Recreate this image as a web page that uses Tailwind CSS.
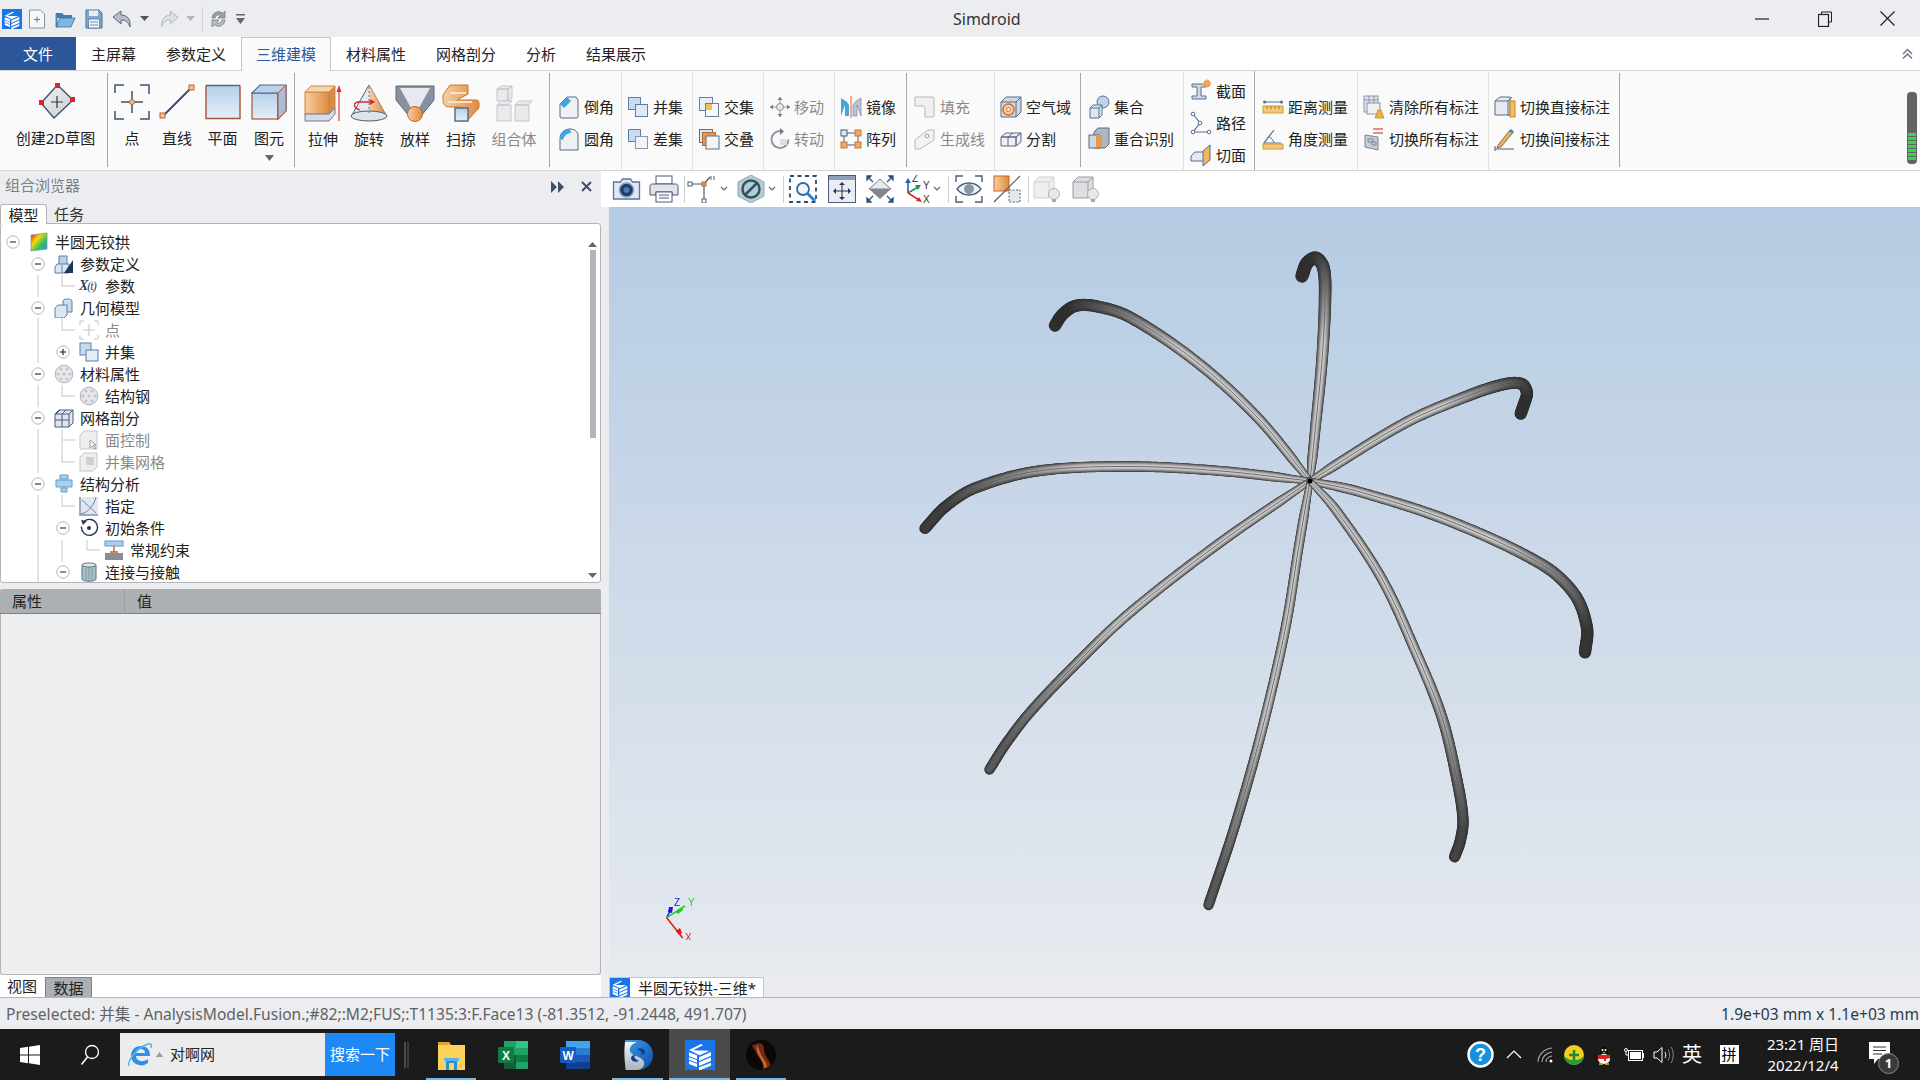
<!DOCTYPE html>
<html lang="en">
<head>
<title>Simdroid</title>
<meta charset="UTF-8">
<script src="https://cdn.jsdelivr.net/npm/@tailwindcss/browser@4"></script>
</head>
<body class="w-[1920px] h-[1080px] overflow-hidden bg-[#ecedf0] text-[15px] leading-none text-[#222] font-['Noto_Sans','Noto_Sans_CJK_SC',sans-serif]">
<svg class="absolute w-0 h-0">
  <defs>
    <linearGradient id="gBlue" x1="0" y1="0" x2="0" y2="1"><stop offset="0" stop-color="#b7d0ea"/><stop offset="1" stop-color="#e4eef8"/></linearGradient>
    <linearGradient id="gGrey" x1="0" y1="0" x2="1" y2="1"><stop offset="0" stop-color="#f2f3f6"/><stop offset="1" stop-color="#c9ccd4"/></linearGradient>
    <linearGradient id="gOrange" x1="0" y1="0" x2="1" y2="0"><stop offset="0" stop-color="#f7cfa2"/><stop offset="1" stop-color="#e08a3e"/></linearGradient>
    <linearGradient id="gRainbow" x1="0" y1="0" x2="1" y2="1"><stop offset="0" stop-color="#e8141c"/><stop offset=".35" stop-color="#f5d80e"/><stop offset=".65" stop-color="#2fc35a"/><stop offset="1" stop-color="#2a8fe8"/></linearGradient>
    <linearGradient id="gSwirl" x1="0" y1="0" x2="1" y2="1"><stop offset="0" stop-color="#3aa0e8"/><stop offset="1" stop-color="#0f4aa8"/></linearGradient>
    <linearGradient id="gSilver" x1="0" y1="0" x2="0" y2="1"><stop offset="0" stop-color="#f4f6f8"/><stop offset="1" stop-color="#aab2bc"/></linearGradient>
    <symbol id="minus" viewBox="0 0 14 14"><circle cx="7" cy="7" r="6.2" fill="#fff" stroke="#b4b4b4"/><path d="M4 7h6" stroke="#666" stroke-width="1.6"/></symbol>
    <symbol id="plus" viewBox="0 0 14 14"><circle cx="7" cy="7" r="6.2" fill="#fff" stroke="#b4b4b4"/><path d="M4 7h6M7 4v6" stroke="#555" stroke-width="1.6"/></symbol>
    <symbol id="chev" viewBox="0 0 8 6"><path d="M1 1l3 3 3-3" fill="none" stroke="#666" stroke-width="1.2"/></symbol>
    <symbol id="ball" viewBox="0 0 20 20"><circle cx="10" cy="10" r="8.8" fill="#e6e7ea" stroke="#aeb1b8"/><g fill="#c3c6cc"><circle cx="7" cy="5" r="1.6"/><circle cx="13" cy="5" r="1.6"/><circle cx="4" cy="10" r="1.6"/><circle cx="10" cy="10" r="1.6"/><circle cx="16" cy="10" r="1.6"/><circle cx="7" cy="15" r="1.6"/><circle cx="13" cy="15" r="1.6"/></g></symbol>
    <symbol id="logo" viewBox="0 0 90 90"><rect width="90" height="90" fill="#1a75e8"/><g fill="#fff"><path d="M12 30 48 12l6 4-30 15 50 1-30 14z"/><path d="M12 37l24 9v36L12 72z"/><path d="M42 52l36-16v11L42 63z"/><path d="M42 67l36-15v11L42 78z"/><path d="M42 82l36-14v9L46 90h-4z" opacity=".95"/></g><path d="M12 50l24 9M12 61l24 9" stroke="#1a75e8" stroke-width="3"/></symbol>
  </defs>
</svg>

<!-- title bar -->
<div class="flex items-center h-[37px] bg-[#ecedf0]">
  <div class="flex items-center w-[953px] pl-[2px]">
    <svg class="w-[20px] h-[20px]"><use href="#logo"/></svg>
    <svg class="ml-[6px] w-[18px] h-[20px]" viewBox="0 0 18 20"><path d="M1.500 1h11l4 4v14h-15z" fill="#f6f7f9" stroke="#8a93a3"/><path d="M6 10.500h6M9 7.500v6" stroke="#6f7787"/></svg>
    <svg class="ml-[9px] w-[21px] h-[18px]" viewBox="0 0 21 18"><path d="M1 3h6l2 2h8v3H1z" fill="#3f7fb5"/><path d="M1 17V4h1v13zM1 17l4-9h15l-4 9z" fill="#7fb6e0" stroke="#3c6f9c" stroke-width=".8"/></svg>
    <svg class="ml-[9px] w-[18px] h-[20px]" viewBox="0 0 18 20"><path d="M1 1h13l3 3v15H1z" fill="#7fa8d0" stroke="#4d7098"/><rect x="4" y="1.500" width="9" height="5.500" fill="#e6eef6"/><rect x="3.500" y="10" width="11" height="9" fill="#eef2f7" stroke="#4d7098" stroke-width=".7"/><path d="M5 13h8M5 16h8" stroke="#7f93a8"/></svg>
    <svg class="ml-[9px] w-[20px] h-[18px]" viewBox="0 0 20 18"><path d="M1 7l8-6v4c6 0 10 4 9 12-2-5-4-7-9-7v4z" fill="#b8bfcb" stroke="#5d6675"/></svg>
    <svg class="ml-[8px] w-[9px] h-[5px]" viewBox="0 0 9 5"><path d="M0 0h9L4.500 5z" fill="#555"/></svg>
    <svg class="ml-[11px] w-[19px] h-[18px]" viewBox="0 0 20 18"><path d="M19 7l-8-6v4C5 5 1 9 2 17c2-5 4-7 9-7v4z" fill="#dcdfe5" stroke="#b0b5bf"/></svg>
    <svg class="ml-[7px] w-[9px] h-[5px]" viewBox="0 0 9 5"><path d="M0 0h9L4.500 5z" fill="#b5b5b5"/></svg>
    <div class="ml-[7px] w-px h-[24px] bg-[#cfd0d4]"></div>
    <svg class="ml-[7px] w-[17px] h-[20px]" viewBox="0 0 17 20"><path d="M2 9a6.500 6.500 0 0 1 11-4.500L15 2v7H8l2.500-2.500A3.500 3.500 0 0 0 5 9z" fill="#9ca2ac" stroke="#6e747e" stroke-width=".7"/><path d="M15 11a6.500 6.500 0 0 1-11 4.500L2 18v-7h7l-2.500 2.500A3.500 3.500 0 0 0 12 11z" fill="#b8bcc4" stroke="#6e747e" stroke-width=".7"/></svg>
    <svg class="ml-[9px] w-[9px] h-[10px]" viewBox="0 0 9 10"><path d="M0 0h9v1.500H0zM0 4h9L4.500 10z" fill="#666"/></svg>
  </div>
  <span class="text-[16px] text-[#333]">Simdroid</span>
  <div class="ml-auto flex mr-[1px]">
    <div class="w-[63px] h-[37px] flex items-center justify-center"><svg class="w-[14px] h-[14px]" viewBox="0 0 14 14"><path d="M0 7h14" stroke="#222" stroke-width="1.2"/></svg></div>
    <div class="w-[63px] h-[37px] flex items-center justify-center"><svg class="w-[14px] h-[16px]" viewBox="0 0 14 16"><path d="M3.500 3V1h10v10h-3" fill="none" stroke="#222"/><rect x=".5" y="3.500" width="10" height="12" fill="none" stroke="#222" stroke-width="1.200"/></svg></div>
    <div class="w-[63px] h-[37px] flex items-center justify-center"><svg class="w-[15px] h-[15px]" viewBox="0 0 15 15"><path d="M.5.500l14 14M14.500.500l-14 14" stroke="#222" stroke-width="1.200"/></svg></div>
  </div>
</div>

<!-- ribbon tabs -->
<div class="flex items-stretch h-[33px] bg-white relative z-10">
  <div class="w-[76px] pt-[1px] bg-[#2b579a] text-white flex items-center justify-center">文件</div>
  <div class="px-[15px] pt-[1px] flex items-center">主屏幕</div>
  <div class="px-[15px] pt-[1px] flex items-center">参数定义</div>
  <div class="px-[14px] flex items-center h-[34px] text-[#2b579a] bg-[#fafafa] border border-b-0 border-[#c4c6ca]">三维建模</div>
  <div class="px-[15px] pt-[1px] flex items-center">材料属性</div>
  <div class="px-[15px] pt-[1px] flex items-center">网格剖分</div>
  <div class="px-[15px] pt-[1px] flex items-center">分析</div>
  <div class="px-[15px] pt-[1px] flex items-center">结果展示</div>
  <div class="ml-auto mr-[6px] flex items-center"><svg class="w-[13px] h-[12px]" viewBox="0 0 13 12"><path d="M2 6l4.500-4.500L11 6M2 10.500l4.500-4.500 4.500 4.500" fill="none" stroke="#6d7788" stroke-width="1.500"/></svg></div>
</div>

<!-- ribbon -->
<div class="flex h-[101px] bg-[#fafafa] border-y border-[#d3d3d3]">
  <!-- sketch -->
  <div class="w-[107px] pl-[4px] flex flex-col items-center pt-[12px]">
    <svg class="ml-[2px] w-[36px] h-[38px]" viewBox="0 0 36 38"><path d="M18.500 2 34 17 15 35 2 20z" fill="url(#gGrey)" stroke="#3e5470" stroke-width="1.400"/><path d="M18 13v12M12 19h12" stroke="#333" stroke-width="1.200"/><g fill="#d8242a"><rect x="16" y="0" width="5" height="5"/><rect x="0" y="17" width="5" height="5"/><rect x="31" y="14" width="5" height="5"/></g></svg>
    <span class="mt-[10px] whitespace-nowrap">创建2D草图</span>
  </div>
  <div class="w-px h-[94px] mt-[2px] bg-[#a8a8a8]"></div>

  <!-- primitives -->
  <div class="w-[186px] pl-[1px] flex">
    <div class="w-[46px] flex flex-col items-center pt-[13px]">
      <svg class="w-[36px] h-[36px]" viewBox="0 0 36 36"><path d="M1 9V1h9M26 1h9v9M35 27v8h-9M10 35H1v-8" fill="none" stroke="#3e5470" stroke-width="1.500"/><path d="M18 7v22M7 18h22" stroke="#3e5470" stroke-width="1.500"/><circle cx="18" cy="18" r="2.500" fill="#f1c38e" stroke="#c8612a"/></svg>
      <span class="mt-[11px]">点</span>
    </div>
    <div class="w-[44px] flex flex-col items-center pt-[13px]">
      <svg class="w-[36px] h-[36px]" viewBox="0 0 36 36"><path d="M4 32 32 4" stroke="#2f4a6b" stroke-width="1.800"/><rect x="1" y="29" width="5" height="5" fill="#f1c38e" stroke="#c8612a"/><rect x="30" y="1" width="5" height="5" fill="#f1c38e" stroke="#c8612a"/></svg>
      <span class="mt-[11px]">直线</span>
    </div>
    <div class="w-[47px] flex flex-col items-center pt-[13px]">
      <svg class="w-[36px] h-[36px]" viewBox="0 0 36 36"><rect x="1" y="1.500" width="34" height="33" fill="url(#gBlue)"/><path d="M1 1.500h34" stroke="#4b678c" stroke-width="1.400"/><path d="M1 1.500v33h34v-33" fill="none" stroke="#a4553a" stroke-width="1.400"/></svg>
      <span class="mt-[11px]">平面</span>
    </div>
    <div class="w-[46px] flex flex-col items-center pt-[13px]">
      <svg class="w-[36px] h-[36px]" viewBox="0 0 36 36"><rect x="1" y="9" width="26" height="26" fill="url(#gBlue)" stroke="#a4553a" stroke-width="1.200"/><path d="M1 9l8-8h26v26l-8 8V9z" fill="#bcd0e6" stroke="#4b678c" stroke-width="1.200"/><path d="M27 9l8-8" stroke="#4b678c"/><path d="M27 9v26l8-8V1z" fill="#a9bed6" stroke="#a4553a"/></svg>
      <span class="mt-[11px]">图元</span>
      <svg class="mt-[9px] w-[9px] h-[6px]" viewBox="0 0 9 6"><path d="M0 0h9L4.500 6z" fill="#666"/></svg>
    </div>
    <div class="flex-1"></div>
  </div>
  <div class="w-px h-[94px] mt-[2px] bg-[#a8a8a8]"></div>

  <!-- solids -->
  <div class="w-[254px] flex pl-[5px]">
    <div class="w-[46px] flex flex-col items-center pt-[13px]">
      <svg class="w-[38px] h-[38px]" viewBox="0 0 38 38"><rect x="1" y="8" width="24" height="22" fill="url(#gOrange)" stroke="#c98645"/><path d="M1 8l6-6h24l-6 6z" fill="#f5d5b0" stroke="#c98645"/><path d="M25 8l6-6v22l-6 6z" fill="#d98b46" stroke="#c98645"/><path d="M1 30h24l6-6v6l-6 7H1z" fill="#d7dbe3" stroke="#6f7c90"/><path d="M35 37V5" stroke="#e64a4a" stroke-width="1.300"/><path d="M32.500 8 35 1l2.500 7z" fill="#e03030"/></svg>
      <span class="mt-[10px]">拉伸</span>
    </div>
    <div class="w-[46px] flex flex-col items-center pt-[13px]">
      <svg class="w-[38px] h-[38px]" viewBox="0 0 38 38"><path d="M19 1 2 31h34z" fill="#e6e9ef" stroke="#4b5d75"/><path d="M19 1v30h17z" fill="url(#gOrange)"/><ellipse cx="19" cy="32" rx="18" ry="5" fill="#dfe3ea" stroke="#4b5d75"/><path d="M19 3v28" stroke="#5f7a9c" stroke-dasharray="2 2"/><path d="M24 18H8c-5 1-5 6 2 8" fill="none" stroke="#d92a2a" stroke-width="1.300"/><path d="M25 18l-5-3v6z" fill="#d92a2a"/></svg>
      <span class="mt-[10px]">旋转</span>
    </div>
    <div class="w-[46px] flex flex-col items-center pt-[13px]">
      <svg class="w-[40px] h-[38px]" viewBox="0 0 40 38"><path d="M1 2h38v14L26 32H14L1 16z" fill="#8791a1" stroke="#5e6a7c"/><path d="M5 4h30L24 24h-8z" fill="#e7e9ee"/><circle cx="20" cy="30" r="7.500" fill="url(#gOrange)" stroke="#b96a2c"/></svg>
      <span class="mt-[10px]">放样</span>
    </div>
    <div class="w-[46px] flex flex-col items-center pt-[13px]">
      <svg class="w-[38px] h-[38px]" viewBox="0 0 38 38"><path d="M8 1h18v9l-11 6h19c3 0 3 2 3 4v4l-12 13H19V23H8c-5 0-7-3-7-6v-6z" fill="url(#gOrange)" stroke="#c47a3c"/><path d="M8 9h16M6 18h24" stroke="#fbe5cc" stroke-width="2"/><rect x="13" y="24" width="13" height="13" fill="url(#gBlue)" stroke="#4b5d75" stroke-width="1.300"/></svg>
      <span class="mt-[10px]">扫掠</span>
    </div>
    <div class="w-[60px] flex flex-col items-center pt-[13px] text-[#8a8a8a]">
      <svg class="w-[38px] h-[38px]" viewBox="0 0 38 38"><g fill="#e9eaec" stroke="#c4c6ca"><path d="M2 5l4-3h11l-4 3zM2 5h11v12H2zM13 5l4-3v12l-4 3z"/><path d="M2 21l4-4h11l-4 4zM2 21h14v16H2z"/><path d="M20 21l4-4h13l-4 4zM20 21h14v16H20z"/></g></svg>
      <span class="mt-[10px]">组合体</span>
    </div>
  </div>
  <div class="w-px h-[94px] mt-[2px] bg-[#a8a8a8]"></div>

  <!-- blends -->
  <div class="w-[72px] pl-[8px] pt-[20px] border-r border-[#e2e2e2]">
    <div class="flex items-center h-[32px]"><svg class="w-[22px] h-[24px] mr-[4px]" viewBox="0 0 22 24"><path d="M2 9 9 2h9l2 3v17l-1 1H3l-1-1z" fill="#eef0f4" stroke="#5a6a80"/><path d="M2 9 9 2l4 4-7 7z" fill="#3ba7e0"/></svg>倒角</div>
    <div class="flex items-center h-[32px]"><svg class="w-[22px] h-[24px] mr-[4px]" viewBox="0 0 22 24"><path d="M2 12C2 5 7 2 12 2c5 0 8 3 8 6v15H2z" fill="#eef0f4" stroke="#5a6a80"/><path d="M2 12C2 5 7 2 12 2l1 4c-4 0-7 3-8 7z" fill="#3ba7e0"/></svg>圆角</div>
  </div>
  <!-- booleans -->
  <div class="w-[71px] pl-[5px] pt-[20px] border-r border-[#e2e2e2]">
    <div class="flex items-center h-[32px]"><svg class="w-[22px] h-[22px] mr-[4px]" viewBox="0 0 22 22"><rect x="1.500" y="1.500" width="12" height="12" fill="#c7dcf0" stroke="#5a7fa8"/><rect x="8.500" y="8.500" width="12" height="12" fill="#dfe9f4" stroke="#5a7fa8"/></svg>并集</div>
    <div class="flex items-center h-[32px]"><svg class="w-[22px] h-[22px] mr-[4px]" viewBox="0 0 22 22"><path d="M1.500 1.500h12v7h-5v5h-7z" fill="#c7dcf0" stroke="#5a7fa8"/><rect x="8.500" y="8.500" width="12" height="12" fill="#f2f4f7" stroke="#8a97a8"/></svg>差集</div>
  </div>
  <div class="w-[71px] pl-[5px] pt-[20px] border-r border-[#e2e2e2]">
    <div class="flex items-center h-[32px]"><svg class="w-[22px] h-[22px] mr-[4px]" viewBox="0 0 22 22"><rect x="1.500" y="1.500" width="13" height="13" fill="#e6eef6" stroke="#6a8098"/><rect x="7.500" y="7.500" width="13" height="13" fill="#f5f7fa" stroke="#6a8098"/><rect x="8" y="8" width="6" height="6" fill="#f3c04a"/></svg>交集</div>
    <div class="flex items-center h-[32px]"><svg class="w-[22px] h-[22px] mr-[4px]" viewBox="0 0 22 22"><rect x="1.500" y="1.500" width="13" height="13" fill="#dbe6f1" stroke="#5a7088"/><rect x="4.500" y="4.500" width="13" height="13" fill="#e89a4a" stroke="#b46a2a"/><rect x="8" y="8" width="13" height="13" fill="#f2f4f7" stroke="#5a7088"/></svg>交叠</div>
  </div>
  <!-- move -->
  <div class="w-[71px] pl-[5px] pt-[20px] border-r border-[#e2e2e2] text-[#8a8a8a]">
    <div class="flex items-center h-[32px]"><svg class="w-[22px] h-[22px] mr-[3px]" viewBox="0 0 22 22"><path d="M11 1v20M1 11h20" stroke="#8c9098"/><path d="M11 1l-2.500 3h5zM11 21l-2.500-3h5zM1 11l3-2.500v5zM21 11l-3-2.500v5z" fill="#747a84"/><circle cx="11" cy="11" r="3.500" fill="#e8e9ec" stroke="#8c9098"/></svg>移动</div>
    <div class="flex items-center h-[32px]"><svg class="w-[22px] h-[22px] mr-[3px]" viewBox="0 0 22 22"><path d="M11 3a8.500 8.500 0 1 0 8.500 8.500" fill="none" stroke="#8c9098" stroke-width="1.800"/><path d="M11 0v7l4-3.500z" fill="#747a84"/><path d="M11 11h7v6h-7z" fill="#dcdee2"/></svg>转动</div>
  </div>
  <!-- mirror -->
  <div class="w-[71px] pl-[5px] pt-[20px]">
    <div class="flex items-center h-[32px]"><svg class="w-[22px] h-[22px] mr-[4px]" viewBox="0 0 22 22"><path d="M1 20V2l6 4 2 3v11H5V9z" fill="#47a3d9"/><path d="M21 20V2l-6 4-2 3v11h4V9z" fill="#b9c4d2" stroke="#6f7c90" stroke-width=".6"/><path d="M11 0v22" stroke="#e58a5f" stroke-width="1.400"/></svg>镜像</div>
    <div class="flex items-center h-[32px]"><svg class="w-[22px] h-[22px] mr-[4px]" viewBox="0 0 22 22"><path d="M4 5h14M4 17h14M4 5v12M18 5v12" stroke="#4b5d75"/><rect x="1" y="2" width="6" height="6" fill="#dfe7f0" stroke="#4b5d75"/><rect x="15" y="2" width="6" height="6" fill="#f1a866" stroke="#c47a3c"/><rect x="1" y="14" width="6" height="6" fill="#f1a866" stroke="#c47a3c"/><rect x="15" y="14" width="6" height="6" fill="#f1a866" stroke="#c47a3c"/></svg>阵列</div>
  </div>
  <div class="w-px h-[94px] mt-[2px] bg-[#a8a8a8]"></div>
  <!-- fill -->
  <div class="w-[88px] pl-[7px] pt-[20px] border-r border-[#e2e2e2] text-[#8a8a8a]">
    <div class="flex items-center h-[32px]"><svg class="w-[22px] h-[22px] mr-[4px]" viewBox="0 0 22 22"><path d="M1 1h18l1 1v18l-1 1h-8v-9c0-1-1-2-2-2H1z" fill="#f0f0f1" stroke="#b4b6ba"/></svg>填充</div>
    <div class="flex items-center h-[32px]"><svg class="w-[22px] h-[22px] mr-[4px]" viewBox="0 0 22 22"><path d="M1 12 14 2h6v10L6 21H1z" fill="#f2f2f3" stroke="#b4b6ba"/><circle cx="13" cy="8" r="1.800" fill="#fff" stroke="#9a9ca0"/></svg>生成线</div>
  </div>
  <!-- air -->
  <div class="w-[85px] pl-[5px] pt-[20px]">
    <div class="flex items-center h-[32px]"><svg class="w-[22px] h-[22px] mr-[4px]" viewBox="0 0 22 22"><path d="M1 6l5-5h15v15l-5 5H1z" fill="#cfd9e6" stroke="#5a6a80"/><path d="M1 6h15v15M16 6l5-5" fill="none" stroke="#5a6a80"/><circle cx="8.500" cy="13.500" r="5.500" fill="#f6cfa6" stroke="#d06a2a" stroke-width="1.400"/><circle cx="8.500" cy="13.500" r="2" fill="#fff" stroke="#d06a2a"/></svg>空气域</div>
    <div class="flex items-center h-[32px]"><svg class="w-[22px] h-[22px] mr-[4px]" viewBox="0 0 22 22"><path d="M1 9l5-4h15l-5 4zM1 9h15v9H1zM16 9l5-4v9l-5 4z" fill="#eef0f4" stroke="#5a6a80"/><path d="M8 9v9M8 9l5-4" stroke="#5a6a80"/></svg>分割</div>
  </div>
  <div class="w-px h-[94px] mt-[2px] bg-[#a8a8a8]"></div>
  <!-- assembly -->
  <div class="w-[103px] pl-[7px] pt-[20px] border-r border-[#e2e2e2]">
    <div class="flex items-center h-[32px]"><svg class="w-[22px] h-[24px] mr-[4px]" viewBox="0 0 22 24"><circle cx="15" cy="7" r="6" fill="#bcd3ea" stroke="#55708e"/><path d="M2 13l3-3h9v10l-3 3H2z" fill="#dce7f2" stroke="#55708e"/><path d="M2 13h9v10M11 13l3-3" fill="none" stroke="#55708e"/></svg>集合</div>
    <div class="flex items-center h-[32px]"><svg class="w-[22px] h-[24px] mr-[4px]" viewBox="0 0 22 24"><path d="M6 5l4-4h11v16l-4 4H6z" fill="#aeb6c2" stroke="#5a6a80"/><rect x="1" y="8" width="10" height="13" fill="#cfd6df" stroke="#5a6a80"/><rect x="8" y="8" width="6" height="12" fill="#ea9a45"/></svg>重合识别</div>
  </div>
  <!-- section -->
  <div class="w-[71px] pl-[6px] pt-[4px] border-r border-[#a8a8a8]">
    <div class="flex items-center h-[32px]"><svg class="w-[22px] h-[24px] mr-[4px]" viewBox="0 0 22 24"><path d="M2 5h14v3h-5v9h5v3H2v-3h5V8H2z" fill="#cfd9e6" stroke="#55708e"/><circle cx="17" cy="4.500" r="3.500" fill="#f3953b"/><path d="M17 0v9M12.500 4.500h9" stroke="#f3b47a"/></svg>截面</div>
    <div class="flex items-center h-[32px]"><svg class="w-[22px] h-[24px] mr-[4px]" viewBox="0 0 22 24"><path d="M3 3l7 9-7 9h16" fill="none" stroke="#55708e" stroke-width="1.200"/><g fill="#fff" stroke="#55708e"><circle cx="3" cy="3" r="1.800"/><circle cx="10" cy="12" r="1.800"/><circle cx="3" cy="21" r="1.800"/><circle cx="19" cy="21" r="1.800"/></g></svg>路径</div>
    <div class="flex items-center h-[32px]"><svg class="w-[22px] h-[24px] mr-[4px]" viewBox="0 0 22 24"><path d="M1 13l4-4h9v9H1z" fill="#e6eaf0" stroke="#55708e"/><path d="M13 8l7-6v15l-7 6z" fill="#f5b45c" stroke="#55708e"/></svg>切面</div>
  </div>
  <!-- measure -->
  <div class="w-[103px] pl-[7px] pt-[20px] border-r border-[#e2e2e2]">
    <div class="flex items-center h-[32px]"><svg class="w-[22px] h-[22px] mr-[4px]" viewBox="0 0 22 22"><path d="M2 6h18" stroke="#55708e"/><circle cx="2.500" cy="6" r="1.500" fill="#55708e"/><circle cx="19.500" cy="6" r="1.500" fill="#55708e"/><rect x="1" y="10" width="20" height="7" fill="#f3c678" stroke="#d69a3c"/><path d="M5 10v3M9 10v3M13 10v3M17 10v3" stroke="#a8742a"/></svg>距离测量</div>
    <div class="flex items-center h-[32px]"><svg class="w-[22px] h-[22px] mr-[4px]" viewBox="0 0 22 22"><path d="M12 2 2 15h17" fill="none" stroke="#55708e" stroke-width="1.200"/><path d="M7 9c3 1 4 3 5 6" fill="none" stroke="#55708e"/><rect x="1" y="16" width="20" height="5" fill="#f3c678" stroke="#d69a3c"/></svg>角度测量</div>
  </div>
  <!-- annotate -->
  <div class="w-[131px] pl-[5px] pt-[20px] border-r border-[#e2e2e2]">
    <div class="flex items-center h-[32px]"><svg class="w-[22px] h-[24px] mr-[4px]" viewBox="0 0 22 24"><rect x="1" y="1" width="14" height="16" fill="#dfe4ec" stroke="#8a95a5"/><path d="M1 5h14M6 1v16M11 1v16" stroke="#8a95a5"/><rect x="4" y="8" width="13" height="11" fill="#eef0f4" stroke="#8a95a5"/><path d="M15 15h3l3 8h-9z" fill="#efb43f" stroke="#b47e1c" stroke-width=".7"/></svg>清除所有标注</div>
    <div class="flex items-center h-[32px]"><svg class="w-[22px] h-[24px] mr-[4px]" viewBox="0 0 22 24"><path d="M2 8l13 2v13L2 20z" fill="#c5ccd6" stroke="#7b8797"/><path d="M5 12h5v3H5zM9 15h4v3H9z" fill="none" stroke="#7b8797"/><path d="M10 2h10M10 6h10" stroke="#e6695a" stroke-width="1.300"/></svg>切换所有标注</div>
  </div>
  <div class="w-[130px] pl-[5px] pt-[20px]">
    <div class="flex items-center h-[32px]"><svg class="w-[22px] h-[24px] mr-[4px]" viewBox="0 0 22 24"><path d="M1 6l5-4h10v18H1z" fill="#e6eaf0" stroke="#5a6a80"/><path d="M1 6h13v15M14 6l4-4" fill="none" stroke="#5a6a80"/><rect x="16" y="6" width="5" height="16" fill="#f2bd60" stroke="#c8862a"/></svg>切换直接标注</div>
    <div class="flex items-center h-[32px]"><svg class="w-[22px] h-[24px] mr-[4px]" viewBox="0 0 22 24"><path d="M1 22h19M1 19v6" stroke="#4b5d75"/><path d="M4 18 16 3l3 2.500L7 20l-4 1z" fill="#efb43f" stroke="#4b5d75" stroke-width=".8"/><path d="M15 4l2-2 3 2.500-2 2z" fill="#4f82c0"/></svg>切换间接标注</div>
  </div>
  <div class="w-px h-[94px] mt-[2px] bg-[#a8a8a8]"></div>
  <div class="ml-auto mr-[3px] mt-[21px] w-[10px] h-[72px] rounded-[4px] bg-[#636363] flex flex-col justify-end gap-[1px] px-[1px] pb-[4px]">
    <div class="h-[3px] bg-[#39d353]"></div><div class="h-[3px] bg-[#39d353]"></div><div class="h-[3px] bg-[#39d353]"></div><div class="h-[3px] bg-[#39d353]"></div><div class="h-[3px] bg-[#39d353]"></div><div class="h-[3px] bg-[#39d353]"></div><div class="h-[3px] bg-[#39d353]"></div>
  </div>
</div>

<!-- main area -->
<div class="flex h-[826px]">
  <!-- left dock -->
  <div class="w-[601px] flex flex-col">
    <div class="h-[33px] flex items-center pl-[5px] text-[#7b7f85]">
      <span class="-mt-[4px]">组合浏览器</span>
      <svg class="ml-auto -mt-[2px] w-[13px] h-[12px]" viewBox="0 0 13 12"><path d="M0 0l6 6-6 6zM7 0l6 6-6 6z" fill="#3f5166"/></svg>
      <svg class="ml-[17px] -mt-[2px] mr-[9px] w-[11px] h-[11px]" viewBox="0 0 11 11"><path d="M1 1l9 9M10 1l-9 9" stroke="#3f5166" stroke-width="2"/></svg>
    </div>
    <div class="h-[19px] flex relative z-10">
      <div class="w-[47px] h-[20px] pt-[1px] bg-white border border-b-0 border-[#b5b5b5] rounded-t-[3px] flex items-center justify-center">模型</div>
      <div class="pl-[7px] pt-[1px] flex items-center text-[#333]">任务</div>
    </div>
    <!-- tree -->
    <div class="relative h-[360px] bg-white border border-[#b5b5b5] rounded-[3px] overflow-hidden pt-[7px]">
      <svg class="absolute left-0 top-0 w-[599px] h-[358px]" viewBox="1 224 599 358"><path d="M38 275v22M38 318v45M38 385v22M38 429v44M38 495v88M62 275v11h13M62 318v12h13M62 385v11h13M62 429v33h13M62 440h13M62 495v11h13M62 540v22M87 540v10h13" fill="none" stroke="#d9d9d9" stroke-width="1.400"/></svg>

      <div class="relative flex items-center h-[22px] pl-[5px]"><svg class="w-[14px] h-[14px]"><use href="#minus"/></svg><svg class="ml-[9px] w-[20px] h-[20px]" viewBox="0 0 20 20"><path d="M2 3 18 1v16L2 19z" fill="url(#gRainbow)" stroke="#7d94aa" stroke-width=".8"/></svg><span class="ml-[6px]">半圆无铰拱</span></div>
      <div class="relative flex items-center h-[22px] pl-[30px]"><svg class="w-[14px] h-[14px]"><use href="#minus"/></svg><svg class="ml-[9px] w-[20px] h-[20px]" viewBox="0 0 20 20"><path d="M5 2h8v9H5z" fill="#b9d2ea" stroke="#5d7fa3"/><path d="M1 13l2-3h12v9H1z" fill="#dbe7f3" stroke="#5d7fa3"/><path d="M8 11v8" stroke="#5d7fa3"/><path d="M19 6v13h-9z" fill="#1f3559"/></svg><span class="ml-[6px]">参数定义</span></div>
      <div class="relative flex items-center h-[22px] pl-[55px]"><div class="w-[14px]"></div><span class="ml-[9px] w-[20px] text-[12px] italic font-['Liberation_Serif',serif] text-[#33435c] whitespace-nowrap tracking-[-1px]"><b class="text-[14px]">X</b>(t)</span><span class="ml-[6px]">参数</span></div>
      <div class="relative flex items-center h-[22px] pl-[30px]"><svg class="w-[14px] h-[14px]"><use href="#minus"/></svg><svg class="ml-[9px] w-[20px] h-[20px]" viewBox="0 0 20 20"><ellipse cx="13.500" cy="3" rx="4.500" ry="2" fill="#dbe7f3" stroke="#5d7fa3"/><path d="M9 3v11h9V3" fill="#c7dbee" stroke="#5d7fa3"/><path d="M1 10l3-3h9v10l-3 3H1z" fill="#dbe7f3" stroke="#5d7fa3"/></svg><span class="ml-[6px]">几何模型</span></div>
      <div class="relative flex items-center h-[22px] pl-[55px] text-[#8a8a8a]"><div class="w-[14px]"></div><svg class="ml-[9px] w-[20px] h-[20px]" viewBox="0 0 20 20"><path d="M1 5V1h4M15 1h4v4M19 15v4h-4M5 19H1v-4M10 4v12M4 10h12" fill="none" stroke="#bfc2c7"/></svg><span class="ml-[6px]">点</span></div>
      <div class="relative flex items-center h-[22px] pl-[55px]"><svg class="w-[14px] h-[14px]"><use href="#plus"/></svg><svg class="ml-[9px] w-[20px] h-[20px]" viewBox="0 0 20 20"><rect x="1" y="1" width="11" height="12" fill="#c7dcf0" stroke="#5a7fa8"/><rect x="7" y="8" width="12" height="11" fill="#e4ecf5" stroke="#5a7fa8"/></svg><span class="ml-[6px]">并集</span></div>
      <div class="relative flex items-center h-[22px] pl-[30px]"><svg class="w-[14px] h-[14px]"><use href="#minus"/></svg><svg class="ml-[9px] w-[20px] h-[20px]"><use href="#ball"/></svg><span class="ml-[6px]">材料属性</span></div>
      <div class="relative flex items-center h-[22px] pl-[55px]"><div class="w-[14px]"></div><svg class="ml-[9px] w-[20px] h-[20px]"><use href="#ball"/></svg><span class="ml-[6px]">结构钢</span></div>
      <div class="relative flex items-center h-[22px] pl-[30px]"><svg class="w-[14px] h-[14px]"><use href="#minus"/></svg><svg class="ml-[9px] w-[20px] h-[20px]" viewBox="0 0 20 20"><path d="M1 6l4-4h14v13l-4 4H1z" fill="#dfe6ef" stroke="#4b5d75"/><path d="M1 6h14v13M15 6l4-4M1 12h14M8 6v13M6 2 2 6M12 2 8 6" fill="none" stroke="#4b5d75"/></svg><span class="ml-[6px]">网格剖分</span></div>
      <div class="relative flex items-center h-[22px] pl-[55px] text-[#8a8a8a]"><div class="w-[14px]"></div><svg class="ml-[9px] w-[20px] h-[20px]" viewBox="0 0 20 20"><path d="M1 5l4-4h13v18H1z" fill="#eeeeef" stroke="#c4c6ca"/><path d="M11 10v8l2-2 3 3 1-1-3-3h3z" fill="#fff" stroke="#9a9ca0"/></svg><span class="ml-[6px]">面控制</span></div>
      <div class="relative flex items-center h-[22px] pl-[55px] text-[#8a8a8a]"><div class="w-[14px]"></div><svg class="ml-[9px] w-[20px] h-[20px]" viewBox="0 0 20 20"><path d="M1 5l4-4h13v14l-4 4H1z" fill="#eeeeef" stroke="#c4c6ca"/><rect x="7" y="5" width="8" height="8" fill="#cfd0d3"/></svg><span class="ml-[6px]">并集网格</span></div>
      <div class="relative flex items-center h-[22px] pl-[30px]"><svg class="w-[14px] h-[14px]"><use href="#minus"/></svg><svg class="ml-[9px] w-[20px] h-[20px]" viewBox="0 0 20 20"><path d="M6 1h8v4H6zM2 6h16v7H2zM7 14h6v4H7z" fill="#a8d0ee" stroke="#5c9dcc"/></svg><span class="ml-[6px]">结构分析</span></div>
      <div class="relative flex items-center h-[22px] pl-[55px]"><div class="w-[14px]"></div><svg class="ml-[9px] w-[20px] h-[20px]" viewBox="0 0 20 20"><rect x="1" y="1" width="18" height="18" fill="#e3e6ec"/><path d="M1 1v18h18" fill="none" stroke="#8794a8" stroke-width="1.500"/><path d="M3 4l14 13M2 18C10 16 15 9 17 1" fill="none" stroke="#4d8fc4"/></svg><span class="ml-[6px]">指定</span></div>
      <div class="relative flex items-center h-[22px] pl-[55px]"><svg class="w-[14px] h-[14px]"><use href="#minus"/></svg><svg class="ml-[9px] w-[20px] h-[20px]" viewBox="0 0 20 20"><path d="M5 3.500a8 8 0 1 1-2.500 5" fill="none" stroke="#2a3b52" stroke-width="1.400"/><path d="M2 2l6 1-4 4z" fill="#2a3b52"/><circle cx="10" cy="10" r="2" fill="#1f3559"/></svg><span class="ml-[6px]">初始条件</span></div>
      <div class="relative flex items-center h-[22px] pl-[103px]"><svg class="w-[20px] h-[20px]" viewBox="0 0 20 20"><rect x="1" y="1" width="18" height="5" fill="#a8d0ee" stroke="#5c9dcc"/><path d="M10 6v6M6 12h8" stroke="#c8612a" stroke-width="1.400"/><rect x="1" y="13" width="18" height="7" fill="#8a8d94"/></svg><span class="ml-[6px]">常规约束</span></div>
      <div class="relative flex items-center h-[22px] pl-[55px]"><svg class="w-[14px] h-[14px]"><use href="#minus"/></svg><svg class="ml-[9px] w-[20px] h-[20px]" viewBox="0 0 20 20"><path d="M3 3v14c0 3 14 3 14 0V3" fill="#a9c0c8" stroke="#5a7480"/><ellipse cx="10" cy="3" rx="7" ry="2" fill="#dfe9ee" stroke="#5a7480"/><path d="M7 6v12M10 6v13M13 6v12" stroke="#7d99a5"/></svg><span class="ml-[6px]">连接与接触</span></div>

      <!-- tree scrollbar -->
      <svg class="absolute left-[586px] top-[17px] w-[11px] h-[7px]" viewBox="0 0 11 7"><path d="M5.500 1 10 6H1z" fill="#666"/></svg>
      <div class="absolute left-[589px] top-[26px] w-[6px] h-[188px] bg-[#b4b6b9]"></div>
      <svg class="absolute left-[586px] top-[348px] w-[11px] h-[7px]" viewBox="0 0 11 7"><path d="M5.500 6 10 1H1z" fill="#666"/></svg>
    </div>
    <div class="h-[6px]"></div>
    <!-- properties -->
    <div class="h-[25px] flex items-center bg-[#adb0b3] border-b border-[#7f8285] rounded-t-[2px]">
      <div class="w-[125px] h-full pl-[12px] pt-[1px] flex items-center border-r border-[#9a9da0]">属性</div>
      <div class="pl-[12px] pt-[1px]">值</div>
    </div>
    <div class="h-[361px] bg-[#eceef0] border border-t-0 border-[#b5b5b5] rounded-b-[3px]"></div>
    <div class="h-[22px] flex bg-white">
      <div class="w-[45px] pt-[1px] flex items-center pl-[7px]">视图</div>
      <div class="w-[47px] mt-[2px] pt-[1px] flex items-center justify-center bg-[#adb0b3] border border-b-0 border-[#7f8285]">数据</div>
    </div>
  </div>

  <!-- viewport column -->
  <div class="w-[1311px] ml-[8px] flex flex-col">
    <div class="h-[36px] -ml-[8px] pl-[8px] bg-white flex items-center">
      <svg class="w-[35px] h-[26px]" viewBox="-3.500 0 35 26"><path d="M1 6h7l2-3h8l2 3h7v17H1z" fill="#dfe8f4" stroke="#5a7396" stroke-width="1.300"/><circle cx="14" cy="14" r="7" fill="#1f3c6b" stroke="#8aa3c4" stroke-width="1.500"/><circle cx="14" cy="14" r="3" fill="#5079b5"/></svg>
      <svg class="w-[40px] h-[28px]" viewBox="-6 0 40 28"><rect x="6" y="1" width="16" height="8" fill="#fff" stroke="#4b5d75"/><path d="M2 9h24c1 0 2 1 2 2v9h-6v-3H6v3H0v-9c0-1 1-2 2-2z" fill="#dfe3ea" stroke="#4b5d75"/><rect x="6" y="17" width="16" height="10" fill="#fff" stroke="#4b5d75"/><path d="M9 20h10M9 23h10" stroke="#4b5d75"/></svg>
      <div class="w-px h-[27px] bg-[#cfd0d4]"></div>
      <svg class="w-[35px] h-[28px]" viewBox="-3 0 35 28"><path d="M3 9h13v16M16 9 22 2" fill="none" stroke="#4b5d75" stroke-width="1.200"/><rect x="0" y="7" width="4" height="4" fill="#fff" stroke="#4b5d75"/><rect x="14" y="24" width="4" height="4" fill="#fff" stroke="#4b5d75"/><rect x="14" y="7" width="4" height="4" fill="#e99b55" stroke="#c8612a"/><path d="M23 1v4M26 1v4" stroke="#4b5d75"/></svg>
      <svg class="w-[8px] h-[6px]"><use href="#chev"/></svg>
      <svg class="ml-[6px] w-[34px] h-[28px]" viewBox="-3 0 34 28"><path d="M14 0 27 7v14l-13 7-13-7V7z" fill="#b5cdd2" stroke="#8fa9ae"/><circle cx="14" cy="14" r="8.500" fill="none" stroke="#2f5563" stroke-width="2.500"/><path d="M8 20 20 8" stroke="#2f5563" stroke-width="2.500"/></svg>
      <svg class="w-[8px] h-[6px]"><use href="#chev"/></svg>
      <div class="ml-[7px] w-px h-[27px] bg-[#cfd0d4]"></div>
      <svg class="w-[38px] h-[28px]" viewBox="-5 0 38 28"><rect x="1" y="1" width="26" height="26" fill="none" stroke="#2f4a6b" stroke-width="1.800" stroke-dasharray="4 3.500"/><circle cx="14" cy="14" r="6" fill="#f0f5fb" stroke="#2f6da8" stroke-width="1.800"/><path d="M18 18l8 8" stroke="#2a82c9" stroke-width="3"/></svg>
      <svg class="w-[40px] h-[28px]" viewBox="-6 0 40 28"><rect x=".5" y=".5" width="27" height="27" fill="#eaedf2" stroke="#4b5d75"/><rect x="1" y="1" width="26" height="4" fill="#8da0b8"/><path d="M14 8v16M6 16h16" stroke="#1f3559"/><path d="M14 7l-3 3h6zM14 25l-3-3h6zM5 16l3-3v6zM23 16l-3-3v6z" fill="#1f3559"/></svg>
      <svg class="w-[36px] h-[28px]" viewBox="-4 0 36 28"><path d="M14 4 25 14H3z" fill="#e8e9ec" stroke="#7d8088"/><path d="M14 24 25 14H3z" fill="#82868e"/><path d="M1 1l4 0-4 4zM27 1l-4 0 4 4zM1 27l4 0-4-4zM27 27l-4 0 4-4zM2 2l5 5M26 2l-5 5M2 26l5-5M26 26l-5-5" fill="#2a4e78" stroke="#2a4e78" stroke-width="1.300"/></svg>
      <svg class="w-[34px] h-[28px]" viewBox="-2 0 34 28"><path d="M8 18V6" stroke="#2260c8" stroke-width="1.600"/><path d="M8 3 5 8h6z" fill="#2260c8"/><path d="M8 18 18 12" stroke="#1a9a4c" stroke-width="1.600"/><path d="M21 10l-6 0 3 5z" fill="#1a9a4c"/><path d="M8 18 19 25" stroke="#e02828" stroke-width="1.600"/><path d="M22 27l-6-1 3-4z" fill="#e02828"/><text x="12" y="7" font-size="10" fill="#333" font-family="Liberation Sans">Z</text><text x="23" y="14" font-size="10" fill="#333" font-family="Liberation Sans">Y</text><text x="23" y="28" font-size="10" fill="#333" font-family="Liberation Sans">X</text></svg>
      <svg class="ml-[1px] w-[8px] h-[6px]"><use href="#chev"/></svg>
      <div class="ml-[7px] w-px h-[27px] bg-[#cfd0d4]"></div>
      <svg class="w-[40px] h-[28px]" viewBox="-6 0 40 28"><path d="M1 7V1h7M20 1h7v6M27 21v6h-7M8 27H1v-6" fill="none" stroke="#4b5d75" stroke-width="1.400"/><path d="M2 14c6-8 18-8 24 0-6 8-18 8-24 0z" fill="#eef2f7" stroke="#4b5d75" stroke-width="1.300"/><circle cx="14" cy="14" r="5" fill="#8896aa"/></svg>
      <svg class="w-[36px] h-[28px]" viewBox="-4 0 36 28"><rect x="1" y="1" width="15" height="15" fill="url(#gOrange)" stroke="#c8612a"/><rect x="16" y="15" width="11" height="12" fill="#e3e8ef" stroke="#4b5d75" stroke-dasharray="2 1.500"/><path d="M1 27 27 1" stroke="#4b5d75" stroke-width="1.200"/></svg>
      <div class="ml-[3px] w-px h-[27px] bg-[#cfd0d4]"></div>
      <svg class="w-[36px] h-[28px]" viewBox="-4 0 36 28"><path d="M1 7l5-5h15v16l-5 5H1z" fill="#efefef" stroke="#cfd0d2"/><path d="M1 7h15v16M16 7l5-5" fill="none" stroke="#cfd0d2"/><circle cx="21" cy="19" r="5.500" fill="#e9e9e9" stroke="#b2b2b2"/><path d="M19 24h4v3h-4z" fill="#a8a8a8"/></svg>
      <svg class="ml-[3px] w-[36px] h-[28px]" viewBox="-4 0 36 28"><path d="M1 7l5-5h15v16l-5 5H1z" fill="#dedfe2" stroke="#9a9ca1"/><path d="M1 7h15v16M16 7l5-5" fill="none" stroke="#9a9ca1"/><circle cx="21" cy="19" r="5.500" fill="#e9e9e9" stroke="#b2b2b2"/><path d="M19 24h4v3h-4z" fill="#a8a8a8"/></svg>
    </div>
    <!-- 3d view -->
    <div class="relative h-[770px] bg-linear-to-b from-[#b5cbe3] to-[#e7eaef] overflow-hidden">
      <canvas id="model" width="1311" height="770" class="absolute left-0 top-0"></canvas>
      <svg class="absolute left-[41px] top-[683px] w-[50px] h-[50px]" viewBox="650 890 50 50"><path d="M666.700 917.700 671.700 908" stroke="#1616e8" stroke-width="1.500"/><path d="M668 912l1-5h4l-1 6z" fill="#1616e8"/><path d="M666.700 917.700 685 906" stroke="#1fd01f" stroke-width="1.500"/><path d="M676 912l6-5 1 3-5 4z" fill="#1fd01f"/><path d="M666.700 917.700 682.700 938" stroke="#e81616" stroke-width="1.500"/><path d="M676 931l4-3 2 5-3 2z" fill="#e81616"/><text x="674" y="906" font-size="10" fill="#1616e8" font-family="Liberation Sans">Z</text><text x="688" y="906" font-size="10" fill="#1fd01f" font-family="Liberation Sans">Y</text><text x="685" y="941" font-size="10" fill="#e81616" font-family="Liberation Sans">X</text></svg>
    </div>
    <div class="h-[20px] flex bg-[#e9ebef]">
      <div class="w-[155px] h-[21px] bg-white border border-[#c4c6ca] border-b-0 flex items-center">
        <svg class="w-[20px] h-[20px]"><use href="#logo"/></svg>
        <span class="ml-[8px] whitespace-nowrap">半圆无铰拱-三维*</span>
      </div>
    </div>
  </div>
</div>

<!-- status bar -->
<div class="h-[32px] flex items-center justify-between pl-[6px] pr-[1px] pt-[2px] border-t border-[#b5b5b5] bg-[#ecedf0] relative z-10 text-[15.6px]">
  <span class="text-[#5f6265]">Preselected: 并集 - AnalysisModel.Fusion.;#82;:M2;FUS;:T1135:3:F.Face13 (-81.3512, -91.2448, 491.707)</span>
  <span class="text-[#2a3b4c]">1.9e+03 mm x 1.1e+03 mm</span>
</div>

<!-- taskbar -->
<div class="h-[51px] flex items-center bg-[#1b1b1b] text-white">
  <div class="w-[60px] flex justify-center"><svg class="w-[20px] h-[20px]" viewBox="0 0 20 20"><path d="M0 3l8-1.200V9.500H0zM9 1.700 20 0v9.500H9zM0 10.500h8v7.700L0 17zM9 10.500h11V20L9 18.300z" fill="#fff"/></svg></div>
  <div class="w-[60px] flex justify-center"><svg class="w-[20px] h-[22px]" viewBox="0 0 20 22"><circle cx="12" cy="8" r="6.500" fill="none" stroke="#fff" stroke-width="1.300"/><path d="M7.500 13 1.500 20.500" stroke="#fff" stroke-width="1.500"/></svg></div>
  <div class="w-[205px] h-[43px] bg-[#ececec] flex items-center text-[#222] pl-[8px]">
    <svg class="w-[24px] h-[26px]" viewBox="0 0 24 26"><path d="M3 14C3 8 7 4 13 4s9 4 9 10H8c0 5 7 7 12 3v4c-3 2-6 3-9 2-5-1-8-5-8-9z" fill="#2d8fe6"/><path d="M8 11h9c0-3-2-4-4-4s-4 1-5 4z" fill="#ececec"/><path d="M1 24C-1 20 8 6 20 2c3-1 4 1 3 4" fill="none" stroke="#5cb1f2" stroke-width="1.500"/></svg>
    <svg class="ml-[4px] w-[7px] h-[5px]" viewBox="0 0 7 5"><path d="M3.500 0 7 5H0z" fill="#999"/></svg>
    <span class="ml-[7px]">对啊网</span>
  </div>
  <div class="w-[70px] h-[43px] bg-[#1e88f5] flex items-center justify-center">搜索一下</div>
  <div class="ml-[9px] w-[2px] h-[26px] bg-[#4a4a4a]"></div>
  <div class="ml-[1px] w-[2px] h-[26px] bg-[#3a3a3a]"></div>
  <div class="w-[11px]"></div>

  <div class="relative w-[62px] h-[51px] flex items-center justify-center"><svg class="w-[27px] h-[30px]" viewBox="0 0 27 30"><path d="M0 2h11l2 3h14v25H0z" fill="#fbd35c"/><path d="M0 2h11l2 3H0z" fill="#e0a32a"/><path d="M8 30V18h11v12h-3v-7h-5v7z" fill="#2a8fd8"/><path d="M6 18h15v3H6z" fill="#55b3ee"/></svg><div class="absolute left-[6px] right-[6px] bottom-0 h-[2px] bg-[#76b9ed]"></div></div>
  <div class="relative w-[62px] h-[51px] flex items-center justify-center"><svg class="w-[30px] h-[28px]" viewBox="0 0 30 28"><rect x="6" y="0" width="24" height="28" rx="1" fill="#21a366"/><rect x="18" y="0" width="12" height="7" fill="#33c481"/><rect x="6" y="14" width="12" height="14" fill="#185c37"/><rect x="18" y="14" width="12" height="7" fill="#107c41"/><rect x="0" y="6" width="16" height="16" rx="1" fill="#107c41"/><text x="4" y="19" font-size="12" font-weight="700" fill="#fff" font-family="Liberation Sans">X</text></svg></div>
  <div class="relative w-[62px] h-[51px] flex items-center justify-center"><svg class="w-[30px] h-[28px]" viewBox="0 0 30 28"><rect x="6" y="0" width="24" height="28" rx="1" fill="#2b7cd3"/><rect x="6" y="0" width="24" height="7" fill="#41a5ee"/><rect x="6" y="14" width="24" height="7" fill="#185abd"/><rect x="6" y="21" width="24" height="7" fill="#103f91"/><rect x="0" y="6" width="16" height="16" rx="1" fill="#185abd"/><text x="2.500" y="19" font-size="12" font-weight="700" fill="#fff" font-family="Liberation Sans">W</text></svg></div>
  <div class="relative w-[63px] h-[51px] flex items-center justify-center"><svg class="w-[30px] h-[30px]" viewBox="0 0 30 30"><path d="M2 0h13c9 0 15 7 15 15s-6 15-15 15H2z" fill="url(#gSwirl)"/><path d="M2 2h12C8 4 5 9 8 13c3 4 11 3 13 9 1 4-2 7-6 8H3C1 20 1 10 2 2z" fill="url(#gSilver)"/><path d="M14 9c4-2 8 0 8 3 0 2-2 3-4 3 2-3-2-5-4-6zM16 21c-4 2-8 0-8-3 0-2 2-3 4-3-2 3 2 5 4 6z" fill="#123f8f"/></svg><div class="absolute left-[6px] right-[6px] bottom-0 h-[2px] bg-[#76b9ed]"></div></div>
  <div class="relative w-[61px] h-[51px] bg-[#4a4a4a] flex items-center justify-center"><svg class="w-[30px] h-[30px]"><use href="#logo"/></svg><div class="absolute left-0 right-0 bottom-0 h-[2px] bg-[#76b9ed]"></div></div>
  <div class="relative w-[62px] h-[51px] flex items-center justify-center"><svg class="w-[30px] h-[30px]" viewBox="0 0 30 30"><circle cx="15" cy="15" r="15" fill="#0c0705"/><path d="M6 6c5-4 12-4 12 3 0 6 5 11 7 16-3 3-6 4-8 4 1-6-3-10-5-13C10 12 8 9 6 6z" fill="#6e2a12"/><path d="M11 5c3 5 3 9 6 13 2 3 4 5 4 9l-3 1c0-5-3-8-5-12-2-3-3-7-2-11z" fill="#c8662e"/></svg><div class="absolute left-[6px] right-[6px] bottom-0 h-[2px] bg-[#76b9ed]"></div></div>

  <!-- tray -->
  <div class="ml-auto flex items-center">
    <div class="w-[34px] flex justify-center"><svg class="w-[27px] h-[27px]" viewBox="0 0 27 27"><circle cx="13.500" cy="13.500" r="12" fill="#1a8fdc" stroke="#fff" stroke-width="2.500"/><text x="13.500" y="20" text-anchor="middle" font-size="18" font-weight="700" fill="#fff" font-family="Liberation Sans">?</text></svg></div>
    <div class="w-[34px] flex justify-center"><svg class="w-[16px] h-[9px]" viewBox="0 0 16 9"><path d="M1 8l7-7 7 7" fill="none" stroke="#fff" stroke-width="1.200"/></svg></div>
    <div class="w-[28px] flex justify-center"><svg class="w-[16px] h-[16px]" viewBox="0 0 16 16"><path d="M1 15C1 8 7 2 15 1M5 15c0-5 4-9 10-10M9 15c0-3 2-5 6-6" fill="none" stroke="#a8a8a8" stroke-width="1.100"/><circle cx="14" cy="14" r="1.500" fill="#fff"/></svg></div>
    <div class="w-[30px] flex justify-center"><svg class="w-[20px] h-[20px]" viewBox="0 0 20 20"><circle cx="10" cy="10" r="10" fill="#f4cf1f"/><path d="M0 10a10 10 0 0 0 20 0c-3 5-7 5-10 5s-7 0-10-5z" fill="#2a9a3c"/><path d="M10 5v10M5 10h10" stroke="#1f8a35" stroke-width="2.500"/></svg></div>
    <div class="w-[30px] flex justify-center"><svg class="w-[16px] h-[20px]" viewBox="0 0 16 20"><ellipse cx="8" cy="7" rx="5" ry="6.500" fill="#111" stroke="#333" stroke-width=".5"/><ellipse cx="8" cy="14" rx="6" ry="5" fill="#fff"/><path d="M2 10h12v3l-4 1v2H8v-2H2z" fill="#e02020"/><circle cx="6.500" cy="5" r="1" fill="#fff"/><circle cx="9.500" cy="5" r="1" fill="#fff"/><path d="M6.500 7h3L8 8.500z" fill="#f5b91f"/><path d="M3 19h4M9 19h4" stroke="#f5b91f" stroke-width="1.600"/></svg></div>
    <div class="w-[30px] flex justify-center"><svg class="w-[20px] h-[14px]" viewBox="0 0 20 14"><circle cx="2" cy="2" r="1.500" fill="none" stroke="#fff"/><path d="M2 3.500V7h2" fill="none" stroke="#fff"/><rect x="4.500" y="2.500" width="14" height="10" fill="#1b1b1b" stroke="#fff"/><rect x="6" y="4" width="11" height="7" fill="#fff"/><rect x="18.500" y="5" width="1.500" height="5" fill="#fff"/></svg></div>
    <div class="w-[29px] flex justify-center"><svg class="w-[21px] h-[18px]" viewBox="0 0 21 18"><path d="M1 6h3l5-4.500v15L4 12H1z" fill="none" stroke="#fff"/><path d="M12 6c1 2 1 4 0 6" fill="none" stroke="#fff"/><path d="M15 3.500c2 3 2 8 0 11M18 1c3 4 3 12 0 16" fill="none" stroke="#8a8a8a"/></svg></div>
    <div class="w-[28px] flex justify-center text-[20px]">英</div>
    <div class="w-[46px] flex justify-center"><div class="w-[19px] h-[19px] bg-white text-black text-[15px] flex items-center justify-center">拼</div></div>
    <div class="w-[102px] flex flex-col items-center gap-[6px]"><span>23:21 周日</span><span>2022/12/4</span></div>
    <div class="relative w-[50px] h-[51px] flex items-center justify-center">
      <svg class="w-[21px] h-[24px] -mt-[4px]" viewBox="0 0 21 24"><path d="M0 1h21v17H9l-4 5v-5H0z" fill="#fff"/><path d="M4 6h13M4 9.500h13M4 13h9" stroke="#333"/></svg>
      <div class="absolute left-[24px] top-[24px] w-[21px] h-[21px] rounded-full bg-[#3a3a3a] border border-[#8a8a8a] flex items-center justify-center text-[13px] font-bold">1</div>
    </div>
    <div class="w-[16px]"></div>
  </div>
</div>

<script>
  // tube model in the 3d view: spline through page coords, layered from the dark rim to the light middle
  var ctx = document.getElementById('model').getContext('2d')
  var ox = 609, oy = 207, hub = [1310, 481]
  var arms = [
    {w: 14, dark: 1, p: [[1315.5,427],[1322,360],[1325,300],[1323.5,268],[1316,258],[1307,263],[1302,276]]},
    {w: 13, dark: 1, p: [[1258,418],[1198,363],[1129.6,317],[1095,306],[1075,306],[1062,315],[1055,325.5]]},
    {w: 13, dark: 1, p: [[1405,423],[1470,395],[1505,384],[1522,384],[1527,393],[1524,404],[1520.7,413.6]]},
    {w: 12, dark: .9, p: [[1221,471],[1129.6,466.5],[1037.7,471],[975,488],[945,507],[925,528.4]]},
    {w: 13, dark: .95, p: [[1359,491.7],[1451,521.6],[1542.8,565],[1575,595],[1587,628],[1585,652.4]]},
    {w: 11, dark: .7, p: [[1221,542],[1129.6,613],[1070,670],[1028.6,714],[1005,745],[989.5,769.5]]},
    {w: 11, dark: .7, p: [[1299,545],[1287,620],[1272,689],[1254,760],[1232,835],[1208.5,905]]},
    {w: 12, dark: .85, p: [[1336,510],[1382,579],[1415,650],[1441.8,716.7],[1457,780],[1463,820],[1460,842],[1454.6,856.7]]}
  ]

  function dist(a, b) { return Math.hypot(a[0] - b[0], a[1] - b[1]) || 1 }

  // catmull-rom with tangents scaled by chord length, so uneven point spacing gives no kinks
  function spline(pts) {
    var out = []
    for (var i = 0; i < pts.length - 1; i++) {
      var a = pts[Math.max(i - 1, 0)], b = pts[i], c = pts[i + 1], d = pts[Math.min(i + 2, pts.length - 1)]
      var ab = dist(a, b), bc = dist(b, c), cd = dist(c, d)
      var steps = Math.ceil(bc / 3)
      for (var k = 0; k < steps; k++) {
        var t = k / steps, t2 = t * t, t3 = t2 * t
        out.push([0, 1].map(function (n) {
          var m1 = (c[n] - a[n]) * bc / (ab + bc), m2 = (d[n] - b[n]) * bc / (bc + cd)
          return (2 * t3 - 3 * t2 + 1) * b[n] + (t3 - 2 * t2 + t) * m1 + (-2 * t3 + 3 * t2) * c[n] + (t3 - t2) * m2
        }))
      }
    }
    out.push(pts[pts.length - 1])
    return out
  }

  function drawArm(arm) {
    var line = spline([hub].concat(arm.p))
    var n = line.length, layers = 12
    ctx.lineCap = 'round'
    ctx.lineJoin = 'round'
    for (var l = 0; l <= layers; l++) {
      var s = 1 - l / layers
      for (var i = 0; i < n - 1; i++) {
        var t = i / (n - 1)
        var r = (Math.min(t * 12, 1) * 1.5 + 3.2 + (arm.w / 2 - 5) * Math.pow(t, .8))
        var d = Math.min(Math.max((t - .55) / .38, 0), 1) * arm.dark
        var v = 62 + 155 * (1 - Math.pow(s, 1.7))
        v = v + (48 - v) * d
        v = Math.round(v)
        ctx.strokeStyle = 'rgb(' + v + ',' + v + ',' + v + ')'
        ctx.lineWidth = Math.max(2 * r * s, .3)
        ctx.beginPath()
        ctx.moveTo(line[i][0] - ox, line[i][1] - oy)
        ctx.lineTo(line[i + 1][0] - ox, line[i + 1][1] - oy)
        ctx.stroke()
      }
    }
    // hairline along the middle of the tube
    ctx.lineCap = 'butt'
    ctx.lineWidth = .7
    for (var j = 0; j < n - 1; j++) {
      var dk = Math.min(Math.max((j / (n - 1) - .55) / .38, 0), 1) * arm.dark
      ctx.strokeStyle = 'rgba(0,0,0,' + (.75 * (1 - dk)) + ')'
      ctx.beginPath()
      ctx.moveTo(line[j][0] - ox, line[j][1] - oy)
      ctx.lineTo(line[j + 1][0] - ox, line[j + 1][1] - oy)
      ctx.stroke()
    }
  }

  arms.forEach(drawArm)
  ctx.fillStyle = '#000'
  ctx.beginPath()
  ctx.arc(hub[0] - ox, hub[1] - oy, 2.5, 0, Math.PI * 2)
  ctx.fill()
</script>
</body>
</html>
